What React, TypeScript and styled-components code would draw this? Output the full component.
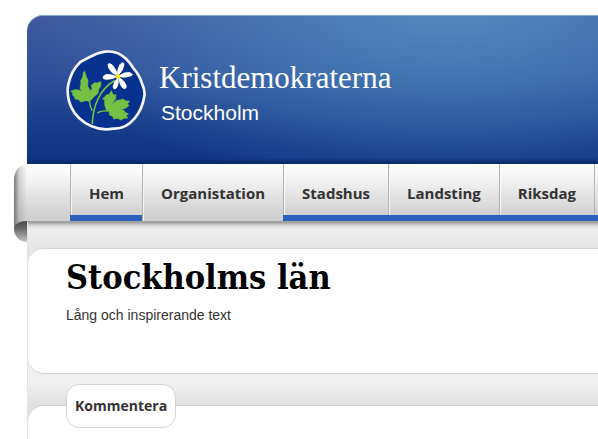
import React from "react";
import styled, { createGlobalStyle } from "styled-components";

const GlobalStyle = createGlobalStyle`
  * {
    box-sizing: border-box;
  }
  body {
    margin: 0;
    background: #fff;
    color: #333;
    font-family: "Liberation Sans", Arial, sans-serif;
    overflow: hidden;
  }
`;

const Page = styled.div`
  padding: 15px 0 0 27px;
  min-height: 100vh;
  display: flex;
  flex-direction: column;
`;

const Header = styled.header`
  display: flex;
  align-items: flex-start;
  gap: 12px;
  padding: 35px 20px 33px 39px;
  border-top-left-radius: 16px;
  background:
    linear-gradient(to top, #0a2766 0, #0a276600 6px),
    radial-gradient(ellipse 420px 190px at 420px -10px, #5a97c8d0 0%, #4d88bfa0 40%, #2f62a800 100%),
    linear-gradient(#3f589c 0%, #2f509a 40%, #143a88 80%, #0f3382 100%);
  box-shadow: inset 0 1px 0 #86a7cc;
`;

const Brand = styled.div`
  display: flex;
  flex-direction: column;
  padding-top: 10px;
  color: #fff;
`;

const BrandName = styled.a`
  font: 31px/36px "Liberation Serif", "Times New Roman", serif;
  color: #fff;
  text-decoration: none;
`;

const BrandPlace = styled.span`
  padding-left: 2px;
  font-size: 21px;
  line-height: 34px;
`;

const Nav = styled.nav`
  position: relative;
  z-index: 1;
  margin-left: -13px;
  padding-left: 56px;
  display: flex;
  border-bottom: 1px solid #a2a2a2;
  border-top-left-radius: 13px 16px;
  background:
    linear-gradient(to right, #777 0, #9996 5px, #bbb0 13px),
    linear-gradient(#fff 0%, #ececec 40%, #d2d2d2 85%, #cfcfcf 100%);

  &::before,
  &::after {
    content: "";
    position: absolute;
    left: 0;
    top: 100%;
    width: 13px;
  }
  &::before {
    height: 8px;
    background: linear-gradient(to right, #777 0, #aaa 5px, #cfcfcf 13px);
  }
  &::after {
    height: 21px;
    border-radius: 13px 0 0 13px / 8px 0 0 13px;
    background: linear-gradient(#444 0, #666 7px, #c4c4c4 100%);
  }
`;

const NavLink = styled.a<{ $marked?: boolean }>`
  flex: none;
  padding: 19px 18px 17px 19px;
  box-shadow:
    inset 0 -6px 0 ${(p) => (p.$marked ? "#2c62bd" : "transparent")},
    inset 1px 0 0 #b5b5b5,
    inset 2px 0 0 #f4f4f4;
  color: #333;
  font: bold 15px/21px "Open Sans", sans-serif;
  text-decoration: none;
`;

const NavRest = styled.div`
  flex: 1;
  box-shadow: inset 0 -6px 0 #2c62bd, inset 1px 0 0 #b5b5b5;
`;

const Content = styled.main`
  flex: 1;
  display: flex;
  flex-direction: column;
  border-left: 1px solid #e2e2e2;
  background:
    linear-gradient(#999 0, #d0d0d0 3px, #eee0 7px) top / 100% 8px no-repeat,
    linear-gradient(#f0f0f0 0, #e6e6e6 26px, #e0e0e0 60px, #f0f0f0 150px, #f0f0f0 162px, #e0e0e0 184px);
`;

const Intro = styled.section`
  margin: 26px 0 31px;
  padding: 7px 20px 47px 38px;
  border: 1px solid #d4d4d4;
  border-width: 1px 0 1px 0;
  border-radius: 16px 0 0 16px;
  background: #fff;
`;

const Title = styled.h1`
  margin: 0;
  color: #000;
  font: bold 34px/42px "DejaVu Serif Condensed", "DejaVu Serif", serif;
`;

const Lead = styled.p`
  margin: 6px 0 0;
  font-size: 14px;
  line-height: 22px;
`;

const Comments = styled.section`
  flex: 1;
  padding-left: 38px;
  border-top: 1px solid #ccc;
  border-top-left-radius: 16px;
  background: #fff;
`;

const CommentButton = styled.button`
  display: block;
  margin: -22px 0 0;
  padding: 11px 8px;
  border: 1px solid #d4d4d4;
  border-radius: 13px;
  background: #fff;
  color: #333;
  font: bold 14px/20px "Open Sans", sans-serif;
`;

const LogoSvg = styled.svg`
  flex: none;
  display: block;
`;

const petals = [
  "M203 106 Q184 101 177 85 Q171 70 179 71 Q187 72 193 84 Q201 96 203 106Z",
  "M204 106 Q200 90 210 74 Q219 63 222 72 Q221 90 204 106Z",
  "M208 107 Q222 96 239 98 Q252 103 244 107 Q225 114 208 110Z",
  "M207 113 Q224 122 228 136 Q230 148 220 145 Q209 136 207 113Z",
  "M204 114 Q207 131 199 144 Q189 151 190 139 Q193 123 204 114Z",
  "M201 110 Q183 102 167 104 Q155 110 161 116 Q177 121 201 110Z",
];

const Logo = () => (
  <LogoSvg width="81" height="81" viewBox="48 30 243 243" role="img" aria-label="Vitsippa">
    <path
      d="M166 35 Q194 32 215 46 Q236 60 251 86 Q269 106 276 131 Q286 151 283 169 Q277 208 254 235 Q226 268 190 266 Q154 272 125 259 Q81 239 64 202 Q50 172 54 138 Q62 93 91 66 Q123 48 140 41 Q155 36 166 35Z"
      fill="#06318e"
      stroke="#f4f4f8"
      strokeWidth="8"
      strokeLinejoin="round"
    />
    <g fill="none" stroke="#76c043" strokeLinecap="round">
      <path d="M127 250 C129 200 148 148 193 122" strokeWidth="5" />
      <path d="M118 179 Q119 198 126 211" strokeWidth="4" />
      <path d="M143 218 Q153 212 172 213" strokeWidth="4" />
    </g>
    <g fill="#76c043" stroke="#76c043" strokeWidth="2" strokeLinejoin="round">
      <path d="M118 184 L108 182 L92 186 L84 178 L75 177 L74 170 L67 165 L69 159 L62 154 L74 149 L86 150 L96 155 L90 145 L93 131 L92 122 L98 112 L100 97 L104 94 L109 111 L114 121 L113 139 L120 150 L117 169 L121 172 L117 158 L126 146 L124 136 L134 128 L140 129 L153 125 L152 139 L146 148 L144 160 L134 168 L126 177Z" />
      <path d="M169 210 L164 194 L164 180 L158 177 L170 164 L177 164 L184 152 L190 165 L198 164 L197 176 L189 187 L180 202 L189 190 L200 181 L210 180 L219 177 L225 182 L239 184 L231 192 L237 196 L232 201 L221 207 L207 208 L222 211 L225 217 L235 222 L229 227 L233 234 L221 235 L213 240 L203 235 L191 237 L188 229 L178 225 L178 215Z" />
    </g>
    <g fill="#fff" stroke="#fff" strokeWidth="3">
      {petals.map((d) => (
        <path key={d} d={d} />
      ))}
    </g>
    <circle cx="204" cy="110" r="7" fill="#f2e61c" />
  </LogoSvg>
);

const links = [
  { label: "Hem", marked: true },
  { label: "Organistation", marked: false },
  { label: "Stadshus", marked: true },
  { label: "Landsting", marked: true },
  { label: "Riksdag", marked: true },
];

export default function App() {
  return (
    <>
      <GlobalStyle />
      <Page>
        <Header>
          <Logo />
          <Brand>
            <BrandName href="#">Kristdemokraterna</BrandName>
            <BrandPlace>Stockholm</BrandPlace>
          </Brand>
        </Header>
        <Nav>
          {links.map((link) => (
            <NavLink key={link.label} href="#" $marked={link.marked}>
              {link.label}
            </NavLink>
          ))}
          <NavRest />
        </Nav>
        <Content>
          <Intro>
            <Title>Stockholms län</Title>
            <Lead>Lång och inspirerande text</Lead>
          </Intro>
          <Comments>
            <CommentButton type="button">Kommentera</CommentButton>
          </Comments>
        </Content>
      </Page>
    </>
  );
}
